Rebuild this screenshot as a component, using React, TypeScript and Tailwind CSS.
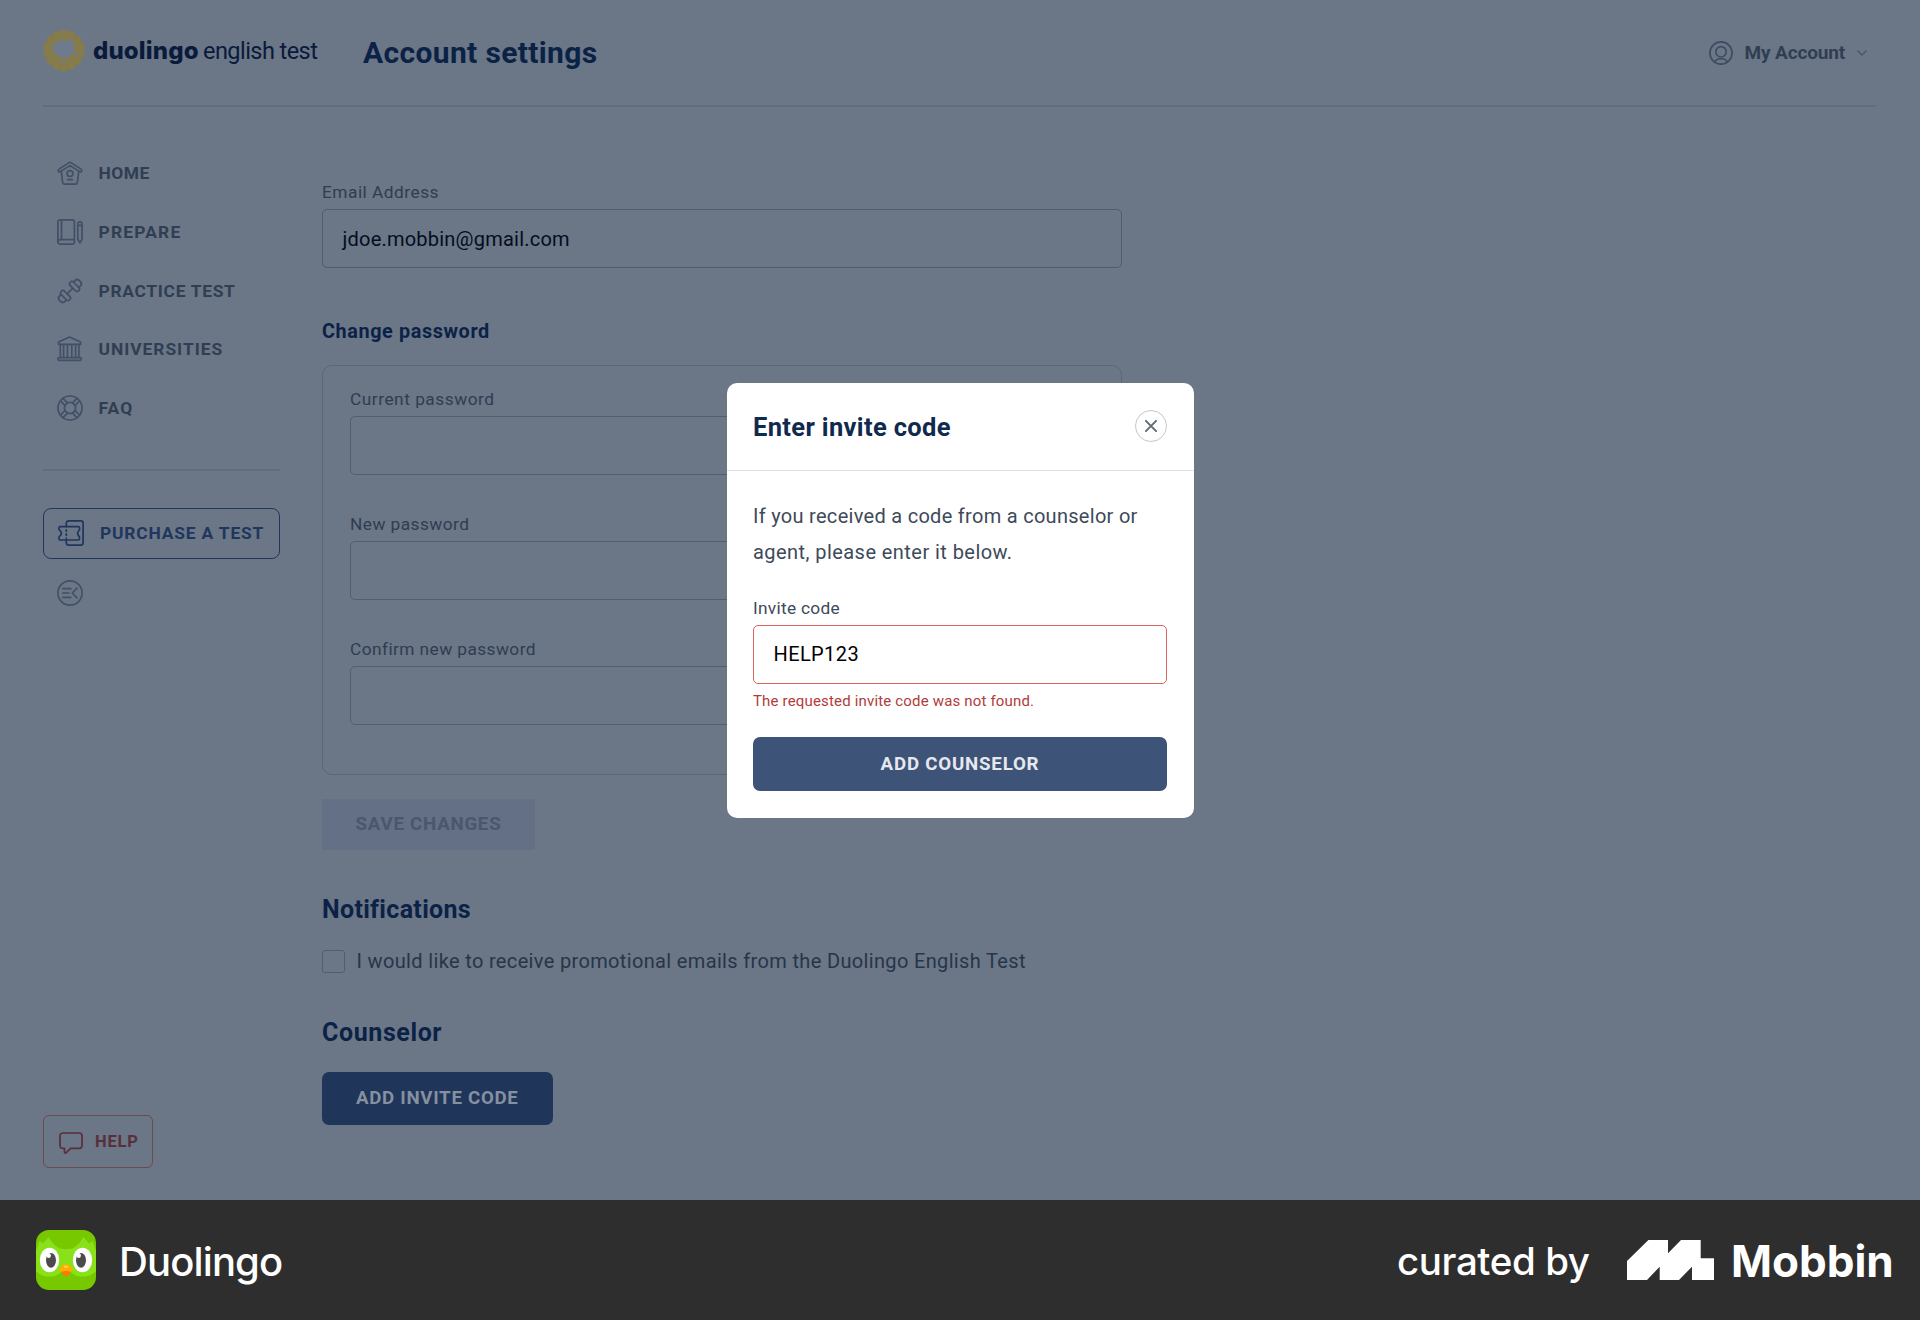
import type { ReactNode } from 'react';

const INK = 'text-[#303e53]';

function Icon({ children, className = '' }: { children: ReactNode; className?: string }) {
  return (
    <svg
      viewBox="0 0 26 26"
      className={`h-[26px] w-[26px] shrink-0 overflow-visible ${className}`}
      fill="none"
      stroke="currentColor"
      strokeWidth="1.7"
      strokeLinecap="round"
      strokeLinejoin="round"
    >
      {children}
    </svg>
  );
}

const HomeIcon = () => (
  <Icon>
    <path d="M2.400 8.900 11.700 2.900c.9-.6 1.700-.6 2.600 0l9.300 6c1 .7 1.700 1.300 1.100 2.300-.6.900-1.500.8-2.400.2L13 5.600l-9.300 5.800c-.9.600-1.800.7-2.400-.2-.6-1 .1-1.600 1.100-2.300Z" />
    <path d="M4.300 11.600 5.600 22.300c.2 1.200.8 1.800 2 1.800h10.800c1.200 0 1.800-.6 2-1.800l1.300-10.700" />
    <circle cx="13" cy="13.600" r="2.900" />
    <path d="M10.700 19.700h4.600" />
  </Icon>
);

const PrepareIcon = () => (
  <Icon>
    <path d="M3.200.9h12c1.400 0 2.200.9 2.200 2.200v19.800c0 1.300-.8 2.200-2.200 2.200h-12C1.800 25.100.9 24.200.9 22.900V3.100C.9 1.800 1.800.9 3.200.9Z" />
    <path d="M4.500 1v19.500M1 22.300c.2-1.200 1-1.700 2.200-1.700h14.100" />
    <path d="M20.800 5c0-1.300.9-2.100 2.100-2.100S25 3.700 25 5v15.200l-2.100 3.600-2.100-3.600V5ZM20.800 6.300H25" />
  </Icon>
);

const PracticeIcon = () => (
  <Icon>
    <g transform="rotate(-45 13 13)">
      <path d="M9.200 13h7.600" />
      <rect x="4.200" y="7" width="4.800" height="12" rx="2.400" />
      <rect x="17" y="7" width="4.800" height="12" rx="2.400" />
      <path d="M4.200 9.200H2.200C.3 9.200-1 10.400-1 12.200v1.600c0 1.800 1.300 3 3.200 3h2M21.800 9.200h2c1.900 0 3.200 1.200 3.200 3v1.600c0 1.800-1.300 3-3.200 3h-2" />
    </g>
  </Icon>
);

const UniversityIcon = () => (
  <Icon>
    <path d="M12.600 1 1.600 6v2.300h22V6l-11-5Z" />
    <path d="M3.300 8.500v12.600M6.600 8.500v12.600M10.400 8.500v12.600M14.800 8.500v12.600M18.600 8.500v12.600M21.900 8.500v12.600" />
    <rect x=".9" y="21.600" width="23.400" height="2.700" rx="1.200" />
  </Icon>
);

const FaqIcon = () => (
  <Icon>
    <circle cx="13" cy="13" r="12" />
    <circle cx="13" cy="13" r="5.600" />
    {[45, 135, 225, 315].map((a) => (
      <path key={a} transform={`rotate(${a} 13 13)`} d="M11.200 7.600V1.300M14.800 7.600V1.300" />
    ))}
  </Icon>
);

const TicketIcon = () => (
  <Icon className="text-[#20365f]">
    <path d="M8.300 6.500V3.200C8.300 1.800 9.200.9 10.600.9h12.200c1.400 0 2.300.9 2.300 2.300v19.600c0 1.400-.9 2.300-2.300 2.300H10.600c-1.400 0-2.300-.9-2.300-2.300v-2.600" />
    <path d="M2.200 6.600h18.100c.8 0 1.200.4 1.200 1.200v1.600c0 .9-1.900 1.700-1.900 3.900s1.900 3 1.900 3.900v1.600c0 .8-.4 1.200-1.200 1.200H2.200c-.8 0-1.200-.4-1.200-1.200v-1.600c0-.9 2.400-1.700 2.400-3.900S1 10.300 1 9.400V7.800c0-.8.4-1.200 1.200-1.200Z" />
    <path d="M8.300 9.800v1.400M8.300 13.900v1.400M8.300 18v.3" />
  </Icon>
);

const CollapseIcon = () => (
  <Icon className="text-[#425067]">
    <circle cx="13" cy="13" r="12.100" />
    <path d="M5.800 8.700h8M5.800 13h6.200M5.800 17.300h8M20 8.200 15.200 13l4.800 4.800" />
  </Icon>
);

function Badge() {
  const lobes = Array.from({ length: 14 }, (_, i) => (i / 14) * Math.PI * 2 - Math.PI / 2);
  return (
    <svg viewBox="0 0 42 43" className="h-[43px] w-[42px]" fill="#857b4b">
      <circle cx="21" cy="21.500" r="19.300" />
      {lobes.map((a) => (
        <circle key={a} cx={21 + Math.cos(a) * 17.400} cy={21.500 + Math.sin(a) * 17.400} r="3.700" />
      ))}
      <path
        fill="#6f7b8c"
        d="M8.200 14.800c1.700 1 3.700.7 5.600-.3L16.500 9c1 1.800 3 3 5.200 3.500 1.700-.4 4.500-2 6.600-4 .2 2.400 1 4.400 2.400 6.500 1 2.400 1.100 4.700.4 6.800-1.200 3.600-3.700 6.400-7.800 7.200-3.100.5-6.300-.1-8.500-2-.9-1-1.400-2-1.700-3.300-1.900-.5-3.500-1.500-4.600-3.100 1.300 0 2.300-.3 3-.8-1.900-1-3.100-2.800-3.300-5Z"
      />
      <path fill="#6f7b8c" d="M33 23c1.500 0 1.900 1.300 1.300 3-.6 1-2 1.200-2.600.4-.4-1.400.2-3 1.300-3.400Z" />
      <ellipse cx="20.800" cy="33.200" rx="2.100" ry="1.500" fill="#6f7b8c" />
    </svg>
  );
}

function OwlIcon() {
  return (
    <svg viewBox="0 0 60 60" className="h-[60px] w-[60px] rounded-[13px]">
      <rect width="60" height="60" fill="#78c800" />
      <path
        fill="#89e219"
        d="M0 21 3.500 11 7 13.500 12.500 7C17 14.500 22 19 27 19h6c5 0 10-4.500 14.500-12L53 13.500 56.500 11 60 21v20c-3 3.700-8 5.500-13.500 5.500-6 0-10-2-12.500-5.500h-8c-2.500 3.500-6.500 5.500-12.500 5.500C8 46.500 3 44.700 0 41V21Z"
      />
      <ellipse cx="13.500" cy="30" rx="9.700" ry="12.300" fill="#fff" />
      <ellipse cx="46.500" cy="30" rx="9.700" ry="12.300" fill="#fff" />
      <ellipse cx="15" cy="30.300" rx="5" ry="7.400" fill="#4b4b4b" />
      <ellipse cx="45" cy="30.300" rx="5" ry="7.400" fill="#4b4b4b" />
      <ellipse cx="12.800" cy="25.500" rx="2.100" ry="2.500" fill="#fff" />
      <ellipse cx="42.800" cy="25.500" rx="2.100" ry="2.500" fill="#fff" />
      <path fill="#ff7800" d="M25.500 40h9c0 3.700-1.700 6-4.500 6s-4.500-2.300-4.500-6Z" />
      <path fill="#ffaf00" d="M30 34.200c3 0 5.500 2 6.700 4.600.5 1.300-.2 2.500-1.600 2.700-1.900.3-3.300-.6-5.100-.6s-3.200.9-5.100.6c-1.400-.2-2.100-1.400-1.600-2.700 1.200-2.600 3.700-4.600 6.700-4.600Z" />
      <ellipse cx="30" cy="36.800" rx="2.300" ry="1.300" fill="#ffd24a" />
    </svg>
  );
}

const NAV = [
  { icon: <HomeIcon />, label: 'HOME', track: 'tracking-[0.5px]' },
  { icon: <PrepareIcon />, label: 'PREPARE', track: 'tracking-[1.2px]' },
  { icon: <PracticeIcon />, label: 'PRACTICE TEST', track: 'tracking-[0.7px]' },
  { icon: <UniversityIcon />, label: 'UNIVERSITIES', track: 'tracking-[0.97px]' },
  { icon: <FaqIcon />, label: 'FAQ', track: 'tracking-[1.1px]' },
];

const PASSWORDS = [
  { label: 'Current password', track: 'tracking-[0.52px]' },
  { label: 'New password', track: 'tracking-[0.45px]' },
  { label: 'Confirm new password', track: 'tracking-[0.43px]' },
];

function Header() {
  return (
    <header className="mr-[44px] ml-[43px] flex h-[107px] items-center border-b-2 border-[#606d7f]">
      <div className="flex items-center pb-[4px]">
        <Badge />
        <span className="ml-[8px] w-[110px] whitespace-nowrap font-['Inter'] text-[24px] leading-[30px] font-extrabold tracking-[0.15px] text-[#0a1a3b]">
          duolingo
        </span>
        <span className="w-[160px] whitespace-nowrap text-[23.5px] leading-[30px] tracking-[-0.55px] text-[#0a1a3b]">english test</span>
      </div>
      <h1 className="text-[30px] leading-[36px] font-bold tracking-[0.35px] text-[#0b2247]">Account settings</h1>
      <div className={`ml-auto flex items-center ${INK}`}>
        <svg viewBox="0 0 24 24" className="h-[24px] w-[24px] text-[#3d4b61]" fill="none" stroke="currentColor" strokeWidth="1.600">
          <circle cx="12" cy="12" r="11.100" />
          <circle cx="12" cy="10.800" r="5.200" />
          <path d="M5.800 21c.6-2.100 3-3.300 6.200-3.300s5.600 1.200 6.200 3.300" />
        </svg>
        <span className="ml-[12px] text-[19px] leading-6 font-bold tracking-[-0.15px]">My Account</span>
        <svg viewBox="0 0 10 6" className="mr-[9px] ml-[12px] h-[6px] w-[10px] text-[#4a586d]" fill="none" stroke="currentColor" strokeWidth="1.500" strokeLinecap="round">
          <path d="m1 1 4 4 4-4" />
        </svg>
      </div>
    </header>
  );
}

function Sidebar() {
  return (
    <aside className={`flex w-[237px] shrink-0 flex-col pt-[37px] pb-[32px] ${INK}`}>
      <nav>
        {NAV.map((n) => (
          <a key={n.label} className="flex h-[58.700px] items-center pl-[13.500px]">
            <span className="text-[#425067]">{n.icon}</span>
            <span className={`ml-[16px] text-[17.400px] leading-6 font-bold ${n.track}`}>{n.label}</span>
          </a>
        ))}
      </nav>
      <div className="mt-[31.500px] h-[2px] bg-[#606d7f]" />
      <button className="mt-[37px] flex h-[51px] w-[237px] items-center rounded-[8px] border-[1.500px] border-[#20365f] pl-[14px] text-[#20365f]">
        <TicketIcon />
        <span className="ml-[16px] text-[17.400px] leading-6 font-bold tracking-[0.83px] whitespace-nowrap">PURCHASE A TEST</span>
      </button>
      <div className="mt-[21px] pl-[13.500px]">
        <CollapseIcon />
      </div>
      <button className="mt-auto flex h-[53px] w-[110px] items-center rounded-[6px] border-[1.500px] border-[#6b4b4d] pl-[15px] text-[#57303a]">
        <svg viewBox="0 0 24 22" className="mt-[2px] h-[22px] w-[24px]" fill="none" stroke="currentColor" strokeWidth="1.700" strokeLinejoin="round">
          <path d="M3.800 1h16.400C21.900 1 23 2.100 23 3.800v9.800c0 1.700-1.100 2.800-2.800 2.800h-8.600L7 20.800c-.7.600-1.500.2-1.500-.7v-3.700H3.800C2.100 16.400 1 15.300 1 13.600V3.800C1 2.100 2.100 1 3.800 1Z" />
        </svg>
        <span className="ml-[12px] text-[16.500px] leading-6 font-bold tracking-[0.8px]">HELP</span>
      </button>
    </aside>
  );
}

function Content() {
  return (
    <main className="ml-[42px] w-[800px] pt-[72.500px] text-[#2f3d52]">
      <label className="block text-[17.300px] leading-6 tracking-[0.5px]">Email Address</label>
      <div className="mt-[5.500px] flex h-[59px] items-center rounded-[5px] border border-[#4f5c70] pl-[19.500px] text-[20px] tracking-[0.22px] text-[#040d1f]">
        jdoe.mobbin@gmail.com
      </div>
      <h2 className="mt-[51.500px] text-[19.800px] leading-6 font-bold tracking-[0.62px] text-[#0b2247]">Change password</h2>
      <section className="mt-[21.500px] h-[410px] rounded-[10px] border border-[#5a677a] px-[27px] pt-[20.500px]">
        {PASSWORDS.map((p) => (
          <div key={p.label} className="h-[125.300px]">
            <label className={`block text-[17.300px] leading-6 ${p.track}`}>{p.label}</label>
            <div className="mt-[5px] h-[59px] rounded-[5px] border border-[#525f73]" />
          </div>
        ))}
      </section>
      <button className="mt-[23.500px] block h-[51px] w-[213px] rounded-[2px] bg-[#637086] text-[18.700px] font-bold tracking-[0.75px] text-[#4a576c]">
        SAVE CHANGES
      </button>
      <h2 className="mt-[45.500px] text-[25px] leading-[30px] font-bold tracking-[0.32px] text-[#0b2247]">Notifications</h2>
      <label className="mt-[24.500px] flex h-[23px] items-center">
        <span className="h-[23px] w-[23px] rounded-[3px] border border-[#505d71]" />
        <span className="ml-[11.500px] text-[20px] leading-6 tracking-[0.345px] whitespace-nowrap text-[#273549]">
          I would like to receive promotional emails from the Duolingo English Test
        </span>
      </label>
      <h2 className="mt-[45.500px] text-[25px] leading-[30px] font-bold tracking-[0.6px] text-[#0b2247]">Counselor</h2>
      <button className="mt-[23.500px] block h-[53.500px] w-[230.500px] rounded-[7px] bg-[#1f3559] text-[18.700px] font-bold tracking-[0.71px] text-[#8590a0]">
        ADD INVITE CODE
      </button>
    </main>
  );
}

function InviteModal() {
  return (
    <div className="absolute inset-0 flex items-center justify-center">
      <div role="dialog" className="h-[435px] w-[467px] rounded-[10px] bg-white text-[#3d4a59]">
        <div className="flex h-[88px] items-center justify-between border-b-[1.500px] border-[#dfe2e4] px-[26.500px]">
          <h2 className="pt-[1px] text-[25.500px] leading-[30px] font-bold tracking-[0.35px] text-[#102a4e]">Enter invite code</h2>
          <button className="flex h-8 w-8 items-center justify-center rounded-full border border-[#c3c7cb]">
            <svg viewBox="0 0 12 12" className="h-[12px] w-[12px]" stroke="#616b78" strokeWidth="2" strokeLinecap="round">
              <path d="m.9.9 10.200 10.200M11.100.9.9 11.100" />
            </svg>
          </button>
        </div>
        <div className="flex flex-col px-[26.500px] pt-[27px]">
          <p className="text-[20px] leading-[36.600px] whitespace-nowrap">
            <span className="tracking-[0.29px]">If you received a code from a counselor or</span>
            <br />
            <span className="tracking-[0.44px]">agent, please enter it below.</span>
          </p>
          <label className="mt-[25px] text-[17.300px] leading-6 tracking-[0.3px]">Invite code</label>
          <div className="mt-[5px] flex h-[59px] items-center rounded-[5px] border-[1.500px] border-[#dc6560] pl-[19.500px] text-[20px] tracking-[0.4px] text-black">
            HELP123
          </div>
          <p className="mt-[7.500px] text-[15px] leading-5 tracking-[0.17px] text-[#b13c3a]">The requested invite code was not found.</p>
          <button className="mt-[25.500px] h-[54px] rounded-[7px] bg-[#3d5377] text-[18.700px] font-bold tracking-[0.79px] text-[#e6e8ed]">
            ADD COUNSELOR
          </button>
        </div>
      </div>
    </div>
  );
}

function Footer() {
  return (
    <footer className="flex h-[120px] items-center bg-[#2e2e2e] pl-[36px] font-['Inter'] text-white">
      <OwlIcon />
      <span className="ml-[23px] pt-[3px] text-[40px] leading-[48px] font-medium tracking-[-0.87px]">Duolingo</span>
      <div className="ml-auto flex items-center">
        <span className="w-[230px] pt-[2px] text-[38.500px] leading-[48px] font-medium tracking-[-0.4px] whitespace-nowrap">curated by</span>
        <svg viewBox="0 0 87 40" className="h-[40px] w-[87px]" fill="#fff">
          <path d="M0 21 21.400 0H41v13.300L54 0h19.700v18.300H87V40H65V26.700L52 40H32.700V26.700L20 40H0V21Z" />
        </svg>
        <span className="ml-[17px] w-[189px] pt-[1px] text-[44px] leading-[48px] font-bold tracking-[0px]">Mobbin</span>
      </div>
    </footer>
  );
}

export default function App() {
  return (
    <div className="flex h-[1320px] w-[1920px] flex-col overflow-hidden font-['Roboto',sans-serif]">
      <div className="relative flex h-[1200px] flex-col bg-[#6b7686]">
        <Header />
        <div className="flex flex-1 pl-[43px]">
          <Sidebar />
          <Content />
        </div>
        <InviteModal />
      </div>
      <Footer />
    </div>
  );
}
